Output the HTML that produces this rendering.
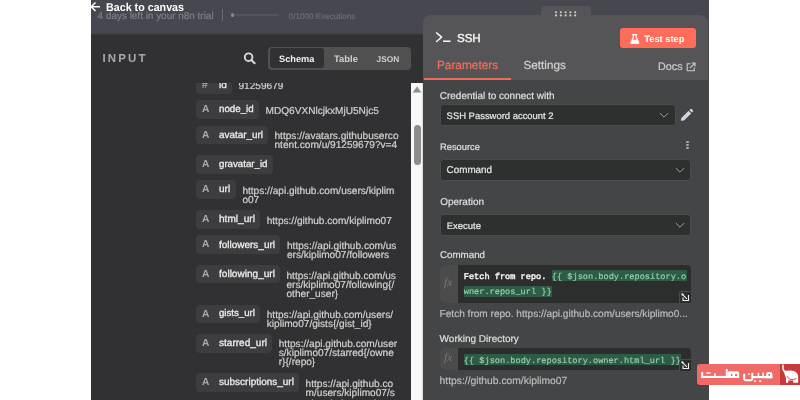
<!DOCTYPE html>
<html><head><meta charset="utf-8"><style>
html,body{margin:0;padding:0;width:800px;height:400px;overflow:hidden;background:#fff;position:relative}
.t{position:absolute;white-space:pre;text-rendering:geometricPrecision}
#w{position:absolute;left:0;top:0;width:800px;height:400px;will-change:transform}
</style></head><body><div id="w">
<div style="position:absolute;left:91px;top:0px;width:618px;height:400px;background:#474750;border-radius:0;"></div>
<div style="position:absolute;left:91px;top:34px;width:320px;height:366px;background:#313133;border-radius:0;"></div>
<div style="position:absolute;left:411px;top:34px;width:12px;height:49px;background:#313133;border-radius:0;"></div>
<div style="position:absolute;left:91px;top:33px;width:332px;height:1px;background:#424249;border-radius:0;"></div>
<div style="position:absolute;left:91px;top:34px;width:332px;height:1px;background:#38383c;border-radius:0;"></div>
<div style="position:absolute;left:411px;top:82.5px;width:12px;height:317.5px;background:#f7f7f7;border-radius:0;box-shadow: inset -1px 0 0 #dcdcdc;"></div>
<svg style="position:absolute;left:411px;top:82px" width="12" height="14"><path d="M1.6 10.4 L6 4.4 L10.4 10.4 Z" fill="#8e8e8e"/></svg>
<div style="position:absolute;left:413.75px;top:125px;width:7.5px;height:40px;background:#8c8c8c;border-radius:3.75px;"></div>
<div style="position:absolute;left:423px;top:15px;width:285px;height:385px;background:#444547;border-radius:8px 8px 0 0;"></div>
<div style="position:absolute;left:423px;top:15px;width:285px;height:65px;background:#555557;border-radius:8px 8px 0 0;"></div>
<div style="position:absolute;left:540.5px;top:6px;width:50px;height:14px;background:#555557;border-radius:4px 4px 0 0;"></div>
<svg style="position:absolute;left:540px;top:6px" width="50" height="14"><circle cx="16" cy="6.300000000000001" r="1.05" fill="#cfcfcf"/><circle cx="16" cy="9.4" r="1.05" fill="#cfcfcf"/><circle cx="20.799999999999955" cy="6.300000000000001" r="1.05" fill="#cfcfcf"/><circle cx="20.799999999999955" cy="9.4" r="1.05" fill="#cfcfcf"/><circle cx="25.600000000000023" cy="6.300000000000001" r="1.05" fill="#cfcfcf"/><circle cx="25.600000000000023" cy="9.4" r="1.05" fill="#cfcfcf"/><circle cx="30.399999999999977" cy="6.300000000000001" r="1.05" fill="#cfcfcf"/><circle cx="30.399999999999977" cy="9.4" r="1.05" fill="#cfcfcf"/><circle cx="35.200000000000045" cy="6.300000000000001" r="1.05" fill="#cfcfcf"/><circle cx="35.200000000000045" cy="9.4" r="1.05" fill="#cfcfcf"/></svg>
<svg style="position:absolute;left:89px;top:0px" width="14" height="14"><path d="M2.5 6.8 H11 M6.5 2.5 L2.2 6.8 L6.5 11" stroke="#fff" stroke-width="1.5" fill="none"/></svg>
<div style="position:absolute;left:222px;top:9px;width:1px;height:12px;background:#6b6b70;border-radius:0;"></div>
<div style="position:absolute;left:232px;top:14.3px;width:47px;height:1.6px;background:#54545c;border-radius:1px;"></div>
<div style="position:absolute;left:230.5px;top:13.4px;width:3.5px;height:3.5px;background:#8a8a90;border-radius:50%;"></div>
<svg style="position:absolute;left:240px;top:48px" width="20" height="20"><circle cx="8.6" cy="9.2" r="3.8" stroke="#d6d9de" stroke-width="1.9" fill="none"/><path d="M11.4 12 L14.6 15.2" stroke="#d6d9de" stroke-width="2.1" stroke-linecap="round"/></svg>
<div style="position:absolute;left:268px;top:46.5px;width:143px;height:23.5px;background:#505051;border-radius:4px;"></div>
<div style="position:absolute;left:270px;top:48.4px;width:54px;height:19.6px;background:#313133;border-radius:3px;"></div>
<div style="position:absolute;left:196.25px;top:75.2px;width:35.349999999999994px;height:18.75px;background:#3d3d3f;border-radius:4px;"></div>
<div style="position:absolute;left:196.25px;top:100px;width:62.5px;height:18.75px;background:#3d3d3f;border-radius:4px;"></div>
<div style="position:absolute;left:196.25px;top:125.5px;width:71.75px;height:18.75px;background:#3d3d3f;border-radius:4px;"></div>
<div style="position:absolute;left:196.25px;top:155px;width:76.25px;height:18.75px;background:#3d3d3f;border-radius:4px;"></div>
<div style="position:absolute;left:196.25px;top:180px;width:40.0px;height:18.75px;background:#3d3d3f;border-radius:4px;"></div>
<div style="position:absolute;left:196.25px;top:210px;width:63.75px;height:18.75px;background:#3d3d3f;border-radius:4px;"></div>
<div style="position:absolute;left:196.25px;top:235px;width:83.75px;height:18.75px;background:#3d3d3f;border-radius:4px;"></div>
<div style="position:absolute;left:196.25px;top:264.5px;width:83.75px;height:18.75px;background:#3d3d3f;border-radius:4px;"></div>
<div style="position:absolute;left:196.25px;top:304.5px;width:63.75px;height:18.75px;background:#3d3d3f;border-radius:4px;"></div>
<div style="position:absolute;left:196.25px;top:333.75px;width:75.75px;height:18.75px;background:#3d3d3f;border-radius:4px;"></div>
<div style="position:absolute;left:196.25px;top:373px;width:102.75px;height:18.75px;background:#3d3d3f;border-radius:4px;"></div>
<svg style="position:absolute;left:434px;top:30px" width="20" height="14"><path d="M2.6 2.9 L7.6 7.2 L2.6 11.5" stroke="#f0f0f0" stroke-width="1.6" fill="none" stroke-linecap="round" stroke-linejoin="round"/><path d="M9 11.2 H16.6" stroke="#f0f0f0" stroke-width="1.6"/></svg>
<div style="position:absolute;left:620px;top:28px;width:75.5px;height:20px;background:#ff6d5a;border-radius:3px;"></div>
<svg style="position:absolute;left:629px;top:33px" width="12" height="12"><path d="M3.2 1.6 H8.2 M4.3 1.6 V4.6 L1.9 9.2 Q1.5 10.2 2.5 10.2 H9 Q10 10.2 9.6 9.2 L7.2 4.6 V1.6" stroke="#fff" stroke-width="1.15" fill="none"/><path d="M3 6.8 H8.5 L9.7 9.8 Q9.7 10.4 9 10.4 H2.5 Q1.8 10.4 1.8 9.8 Z" fill="#fff"/></svg>
<div style="position:absolute;left:424px;top:78px;width:87px;height:2px;background:#ee6b5b;border-radius:0;"></div>
<svg style="position:absolute;left:686px;top:62px" width="10" height="10"><path d="M4.5 1.8 H1.2 V8.8 H8.2 V5.5" stroke="#c6cad4" stroke-width="1.1" fill="none"/><path d="M3.8 6.2 L8.6 1.4 M5.6 1 H9 V4.4" stroke="#c6cad4" stroke-width="1.2" fill="none"/></svg>
<div style="position:absolute;left:440px;top:103.75px;width:235.75px;height:22px;background:#2e2f2f;border-radius:4px;box-shadow: inset 0 0 0 1px #4a4b4d;"></div>
<svg style="position:absolute;left:658.2px;top:111.3px" width="12" height="8"><path d="M1.9 2.1 L6 6.2 L10.1 2.1" stroke="#9c9c9c" stroke-width="1" fill="none"/></svg>
<svg style="position:absolute;left:679px;top:108px" width="15" height="15"><path d="M1.8 12.8 L2.4 10 L9.6 2.8 L12.2 5.4 L5 12.6 Z" fill="#d2d6de"/><path d="M10.4 2 L11.4 1 Q12 0.5 12.6 1 L14 2.4 Q14.5 3 14 3.6 L13 4.6 Z" fill="#d2d6de"/></svg>
<div style="position:absolute;left:686.4px;top:140.5px;width:2.2px;height:2.2px;background:#a8a8a8;border-radius:50%;"></div>
<div style="position:absolute;left:686.4px;top:143.70000000000002px;width:2.2px;height:2.2px;background:#a8a8a8;border-radius:50%;"></div>
<div style="position:absolute;left:686.4px;top:146.9px;width:2.2px;height:2.2px;background:#a8a8a8;border-radius:50%;"></div>
<div style="position:absolute;left:440px;top:158.75px;width:251.25px;height:22px;background:#2e2f2f;border-radius:4px;box-shadow: inset 0 0 0 1px #4a4b4d;"></div>
<svg style="position:absolute;left:674px;top:166px" width="12" height="8"><path d="M1.9 2.1 L6 6.2 L10.1 2.1" stroke="#9c9c9c" stroke-width="1" fill="none"/></svg>
<div style="position:absolute;left:440px;top:213.75px;width:251.25px;height:22px;background:#2e2f2f;border-radius:4px;box-shadow: inset 0 0 0 1px #4a4b4d;"></div>
<svg style="position:absolute;left:674px;top:221.3px" width="12" height="8"><path d="M1.9 2.1 L6 6.2 L10.1 2.1" stroke="#9c9c9c" stroke-width="1" fill="none"/></svg>
<div style="position:absolute;left:439.5px;top:264.5px;width:251.5px;height:38.75px;background:#2c2d2d;border-radius:4px;"></div>
<div style="position:absolute;left:439.5px;top:264.5px;width:18.4px;height:38.75px;background:#4b4b4c;border-radius:4px 0 0 4px;"></div>
<div style="position:absolute;left:551.5px;top:270px;width:135.3px;height:11.25px;background:#2f5a45;border-radius:0;"></div>
<div style="position:absolute;left:463.5px;top:286px;width:88.5px;height:11px;background:#2f5a45;border-radius:0;"></div>
<div style="position:absolute;left:679.2px;top:291.2px;width:12px;height:12px;background:#2c2d2d;box-shadow:inset 1px 1px 0 #4a4a4a;border-radius:2px 0 0 0"></div>
<svg style="position:absolute;left:679.2px;top:291.2px" width="12" height="12"><path d="M4 6.5 V9.5 H9.5 V4" stroke="#f0f0f0" stroke-width="1.1" fill="none"/><path d="M3.2 3.2 L7.8 7.8" stroke="#f0f0f0" stroke-width="1.1"/><circle cx="3.4" cy="3.4" r="1.1" fill="#f0f0f0"/></svg>
<div style="position:absolute;left:439.5px;top:348.2px;width:251.5px;height:22.3px;background:#2c2d2d;border-radius:4px;"></div>
<div style="position:absolute;left:439.5px;top:348.2px;width:18.4px;height:22.3px;background:#4b4b4c;border-radius:4px 0 0 4px;"></div>
<div style="position:absolute;left:463.8px;top:353.9px;width:217px;height:11px;background:#2f5a45;border-radius:0;"></div>
<div style="position:absolute;left:679.2px;top:358.6px;width:12px;height:12px;background:#2c2d2d;box-shadow:inset 1px 1px 0 #4a4a4a;border-radius:2px 0 0 0"></div>
<svg style="position:absolute;left:679.2px;top:358.6px" width="12" height="12"><path d="M4 6.5 V9.5 H9.5 V4" stroke="#f0f0f0" stroke-width="1.1" fill="none"/><path d="M3.2 3.2 L7.8 7.8" stroke="#f0f0f0" stroke-width="1.1"/><circle cx="3.4" cy="3.4" r="1.1" fill="#f0f0f0"/></svg>
<div style="position:absolute;left:697px;top:363.5px;width:103px;height:21.5px;background:#f06b68;border-radius:3px 0 0 3px"></div>
<div style="position:absolute;left:780px;top:363.5px;width:20px;height:21.5px;background:#c9393b"></div>
<div class="t" style="left:97.60px;top:9.95px;font-size:9.955px;line-height:13px;font-weight:400;color:#7e7e88;font-family:'Liberation Sans';font-style:normal;-webkit-text-stroke:0.22px #7e7e88;">4 days left in your n8n trial</div>
<div class="t" style="left:105.60px;top:0.65px;font-size:11.400px;line-height:15px;font-weight:700;color:#ffffff;font-family:'Liberation Sans';font-style:normal;transform-origin:0 0;transform:scaleX(0.9408);">Back to canvas</div>
<div class="t" style="left:288.80px;top:10.79px;font-size:8.106px;line-height:11px;font-weight:400;color:#6c6c76;font-family:'Liberation Sans';font-style:normal;-webkit-text-stroke:0.22px #6c6c76;">0/1000 Executions</div>
<div class="t" style="left:102.50px;top:52.02px;font-size:11.500px;line-height:15px;font-weight:700;color:#a8a8a8;font-family:'Liberation Sans';font-style:normal;letter-spacing:2.1px;">INPUT</div>
<div class="t" style="left:279.00px;top:52.90px;font-size:9.230px;line-height:12px;font-weight:700;color:#eeeeee;font-family:'Liberation Sans';font-style:normal;">Schema</div>
<div class="t" style="left:334.00px;top:52.82px;font-size:9.458px;line-height:13px;font-weight:700;color:#d0d0d0;font-family:'Liberation Sans';font-style:normal;">Table</div>
<div class="t" style="left:376.60px;top:53.70px;font-size:8.373px;line-height:11px;font-weight:700;color:#d0d0d0;font-family:'Liberation Sans';font-style:normal;">JSON</div>
<div class="t" style="left:202.00px;top:79.14px;font-size:10.000px;line-height:13px;font-weight:400;color:#a6aab2;font-family:'Liberation Sans';font-style:normal;-webkit-text-stroke:0.22px #a6aab2;">#</div>
<div class="t" style="left:219.00px;top:78.64px;font-size:10.000px;line-height:13px;font-weight:400;color:#ececec;font-family:'Liberation Sans';font-style:normal;-webkit-text-stroke:0.3px #ececec;">id</div>
<div class="t" style="left:238.50px;top:79.80px;font-size:10.100px;line-height:14px;font-weight:400;color:#cfcfcf;font-family:'Liberation Sans';font-style:normal;-webkit-text-stroke:0.22px #cfcfcf;">91259679</div>
<div class="t" style="left:202.00px;top:103.37px;font-size:10.200px;line-height:14px;font-weight:700;color:#a6aab2;font-family:'Liberation Sans';font-style:normal;">A</div>
<div class="t" style="left:219.00px;top:103.02px;font-size:9.764px;line-height:13px;font-weight:400;color:#ececec;font-family:'Liberation Sans';font-style:normal;-webkit-text-stroke:0.3px #ececec;">node_id</div>
<div class="t" style="left:265.50px;top:104.90px;font-size:10.100px;line-height:14px;font-weight:400;color:#cfcfcf;font-family:'Liberation Sans';font-style:normal;-webkit-text-stroke:0.22px #cfcfcf;">MDQ6VXNlcjkxMjU5Njc5</div>
<div class="t" style="left:202.00px;top:128.87px;font-size:10.200px;line-height:14px;font-weight:700;color:#a6aab2;font-family:'Liberation Sans';font-style:normal;">A</div>
<div class="t" style="left:219.00px;top:128.97px;font-size:9.895px;line-height:13px;font-weight:400;color:#ececec;font-family:'Liberation Sans';font-style:normal;-webkit-text-stroke:0.3px #ececec;">avatar_url</div>
<div class="t" style="left:274.50px;top:129.60px;font-size:10.100px;line-height:14px;font-weight:400;color:#cfcfcf;font-family:'Liberation Sans';font-style:normal;-webkit-text-stroke:0.22px #cfcfcf;">https://avatars.githubuserco</div>
<div class="t" style="left:274.50px;top:138.90px;font-size:10.100px;line-height:14px;font-weight:400;color:#cfcfcf;font-family:'Liberation Sans';font-style:normal;-webkit-text-stroke:0.22px #cfcfcf;">ntent.com/u/91259679?v=4</div>
<div class="t" style="left:202.00px;top:158.37px;font-size:10.200px;line-height:14px;font-weight:700;color:#a6aab2;font-family:'Liberation Sans';font-style:normal;">A</div>
<div class="t" style="left:219.00px;top:158.04px;font-size:9.694px;line-height:13px;font-weight:400;color:#ececec;font-family:'Liberation Sans';font-style:normal;-webkit-text-stroke:0.3px #ececec;">gravatar_id</div>
<div class="t" style="left:202.00px;top:183.37px;font-size:10.200px;line-height:14px;font-weight:700;color:#a6aab2;font-family:'Liberation Sans';font-style:normal;">A</div>
<div class="t" style="left:219.00px;top:182.94px;font-size:10.000px;line-height:13px;font-weight:400;color:#ececec;font-family:'Liberation Sans';font-style:normal;-webkit-text-stroke:0.3px #ececec;">url</div>
<div class="t" style="left:242.40px;top:184.60px;font-size:10.100px;line-height:14px;font-weight:400;color:#cfcfcf;font-family:'Liberation Sans';font-style:normal;-webkit-text-stroke:0.22px #cfcfcf;">https://api.github.com/users/kiplim</div>
<div class="t" style="left:242.40px;top:193.80px;font-size:10.100px;line-height:14px;font-weight:400;color:#cfcfcf;font-family:'Liberation Sans';font-style:normal;-webkit-text-stroke:0.22px #cfcfcf;">o07</div>
<div class="t" style="left:202.00px;top:213.37px;font-size:10.200px;line-height:14px;font-weight:700;color:#a6aab2;font-family:'Liberation Sans';font-style:normal;">A</div>
<div class="t" style="left:219.00px;top:213.39px;font-size:10.122px;line-height:14px;font-weight:400;color:#ececec;font-family:'Liberation Sans';font-style:normal;-webkit-text-stroke:0.3px #ececec;">html_url</div>
<div class="t" style="left:266.70px;top:214.50px;font-size:10.100px;line-height:14px;font-weight:400;color:#cfcfcf;font-family:'Liberation Sans';font-style:normal;-webkit-text-stroke:0.22px #cfcfcf;">https://github.com/kiplimo07</div>
<div class="t" style="left:202.00px;top:238.37px;font-size:10.200px;line-height:14px;font-weight:700;color:#a6aab2;font-family:'Liberation Sans';font-style:normal;">A</div>
<div class="t" style="left:219.00px;top:238.94px;font-size:9.976px;line-height:13px;font-weight:400;color:#ececec;font-family:'Liberation Sans';font-style:normal;-webkit-text-stroke:0.3px #ececec;">followers_url</div>
<div class="t" style="left:287.00px;top:239.75px;font-size:10.100px;line-height:14px;font-weight:400;color:#cfcfcf;font-family:'Liberation Sans';font-style:normal;-webkit-text-stroke:0.22px #cfcfcf;">https://api.github.com/us</div>
<div class="t" style="left:287.00px;top:248.80px;font-size:10.100px;line-height:14px;font-weight:400;color:#cfcfcf;font-family:'Liberation Sans';font-style:normal;-webkit-text-stroke:0.22px #cfcfcf;">ers/kiplimo07/followers</div>
<div class="t" style="left:202.00px;top:267.87px;font-size:10.200px;line-height:14px;font-weight:700;color:#a6aab2;font-family:'Liberation Sans';font-style:normal;">A</div>
<div class="t" style="left:219.00px;top:267.91px;font-size:10.074px;line-height:14px;font-weight:400;color:#ececec;font-family:'Liberation Sans';font-style:normal;-webkit-text-stroke:0.3px #ececec;">following_url</div>
<div class="t" style="left:286.50px;top:269.60px;font-size:10.100px;line-height:14px;font-weight:400;color:#cfcfcf;font-family:'Liberation Sans';font-style:normal;-webkit-text-stroke:0.22px #cfcfcf;">https://api.github.com/us</div>
<div class="t" style="left:286.50px;top:278.60px;font-size:10.100px;line-height:14px;font-weight:400;color:#cfcfcf;font-family:'Liberation Sans';font-style:normal;-webkit-text-stroke:0.22px #cfcfcf;">ers/kiplimo07/following{/</div>
<div class="t" style="left:286.50px;top:287.60px;font-size:10.100px;line-height:14px;font-weight:400;color:#cfcfcf;font-family:'Liberation Sans';font-style:normal;-webkit-text-stroke:0.22px #cfcfcf;">other_user}</div>
<div class="t" style="left:202.00px;top:307.87px;font-size:10.200px;line-height:14px;font-weight:700;color:#a6aab2;font-family:'Liberation Sans';font-style:normal;">A</div>
<div class="t" style="left:219.00px;top:307.05px;font-size:9.668px;line-height:13px;font-weight:400;color:#ececec;font-family:'Liberation Sans';font-style:normal;-webkit-text-stroke:0.3px #ececec;">gists_url</div>
<div class="t" style="left:266.75px;top:308.50px;font-size:10.100px;line-height:14px;font-weight:400;color:#cfcfcf;font-family:'Liberation Sans';font-style:normal;-webkit-text-stroke:0.22px #cfcfcf;">https://api.github.com/users/</div>
<div class="t" style="left:266.75px;top:317.50px;font-size:10.100px;line-height:14px;font-weight:400;color:#cfcfcf;font-family:'Liberation Sans';font-style:normal;-webkit-text-stroke:0.22px #cfcfcf;">kiplimo07/gists{/gist_id}</div>
<div class="t" style="left:202.00px;top:337.12px;font-size:10.200px;line-height:14px;font-weight:700;color:#a6aab2;font-family:'Liberation Sans';font-style:normal;">A</div>
<div class="t" style="left:219.00px;top:336.67px;font-size:10.042px;line-height:14px;font-weight:400;color:#ececec;font-family:'Liberation Sans';font-style:normal;-webkit-text-stroke:0.3px #ececec;">starred_url</div>
<div class="t" style="left:278.75px;top:337.60px;font-size:10.100px;line-height:14px;font-weight:400;color:#cfcfcf;font-family:'Liberation Sans';font-style:normal;-webkit-text-stroke:0.22px #cfcfcf;">https://api.github.com/user</div>
<div class="t" style="left:278.75px;top:347.00px;font-size:10.100px;line-height:14px;font-weight:400;color:#cfcfcf;font-family:'Liberation Sans';font-style:normal;-webkit-text-stroke:0.22px #cfcfcf;">s/kiplimo07/starred{/owne</div>
<div class="t" style="left:278.75px;top:355.80px;font-size:10.100px;line-height:14px;font-weight:400;color:#cfcfcf;font-family:'Liberation Sans';font-style:normal;-webkit-text-stroke:0.22px #cfcfcf;">r}{/repo}</div>
<div class="t" style="left:202.00px;top:376.37px;font-size:10.200px;line-height:14px;font-weight:700;color:#a6aab2;font-family:'Liberation Sans';font-style:normal;">A</div>
<div class="t" style="left:219.00px;top:375.94px;font-size:9.995px;line-height:13px;font-weight:400;color:#ececec;font-family:'Liberation Sans';font-style:normal;-webkit-text-stroke:0.3px #ececec;">subscriptions_url</div>
<div class="t" style="left:305.60px;top:377.90px;font-size:10.100px;line-height:14px;font-weight:400;color:#cfcfcf;font-family:'Liberation Sans';font-style:normal;-webkit-text-stroke:0.22px #cfcfcf;">https://api.github.co</div>
<div class="t" style="left:305.60px;top:386.90px;font-size:10.100px;line-height:14px;font-weight:400;color:#cfcfcf;font-family:'Liberation Sans';font-style:normal;-webkit-text-stroke:0.22px #cfcfcf;">m/users/kiplimo07/s</div>
<div class="t" style="left:305.60px;top:398.40px;font-size:10.100px;line-height:14px;font-weight:400;color:#cfcfcf;font-family:'Liberation Sans';font-style:normal;-webkit-text-stroke:0.22px #cfcfcf;">ubscriptions_url</div>
<div class="t" style="left:457.00px;top:30.68px;font-size:11.600px;line-height:16px;font-weight:400;color:#f0f0f0;font-family:'Liberation Sans';font-style:normal;-webkit-text-stroke:0.45px #f0f0f0;letter-spacing:-0.1px;">SSH</div>
<div class="t" style="left:644.20px;top:32.86px;font-size:9.338px;line-height:13px;font-weight:700;color:#ffffff;font-family:'Liberation Sans';font-style:normal;">Test step</div>
<div class="t" style="left:436.90px;top:57.28px;font-size:11.880px;line-height:16px;font-weight:400;color:#f46e5d;font-family:'Liberation Sans';font-style:normal;-webkit-text-stroke:0.22px #f46e5d;">Parameters</div>
<div class="t" style="left:523.50px;top:58.34px;font-size:11.707px;line-height:16px;font-weight:400;color:#d2d2d2;font-family:'Liberation Sans';font-style:normal;-webkit-text-stroke:0.22px #d2d2d2;">Settings</div>
<div class="t" style="left:657.90px;top:59.64px;font-size:10.841px;line-height:15px;font-weight:400;color:#c6cad4;font-family:'Liberation Sans';font-style:normal;-webkit-text-stroke:0.22px #c6cad4;">Docs</div>
<div class="t" style="left:439.80px;top:89.64px;font-size:9.977px;line-height:13px;font-weight:400;color:#dedede;font-family:'Liberation Sans';font-style:normal;-webkit-text-stroke:0.22px #dedede;">Credential to connect with</div>
<div class="t" style="left:446.60px;top:110.22px;font-size:9.454px;line-height:13px;font-weight:400;color:#e4e4e4;font-family:'Liberation Sans';font-style:normal;-webkit-text-stroke:0.22px #e4e4e4;">SSH Password account 2</div>
<div class="t" style="left:440.00px;top:141.26px;font-size:9.346px;line-height:13px;font-weight:400;color:#dedede;font-family:'Liberation Sans';font-style:normal;-webkit-text-stroke:0.22px #dedede;">Resource</div>
<div class="t" style="left:446.60px;top:164.18px;font-size:9.864px;line-height:13px;font-weight:400;color:#e4e4e4;font-family:'Liberation Sans';font-style:normal;-webkit-text-stroke:0.22px #e4e4e4;">Command</div>
<div class="t" style="left:440.20px;top:196.04px;font-size:9.974px;line-height:13px;font-weight:400;color:#dedede;font-family:'Liberation Sans';font-style:normal;-webkit-text-stroke:0.22px #dedede;">Operation</div>
<div class="t" style="left:446.80px;top:219.52px;font-size:9.465px;line-height:13px;font-weight:400;color:#e4e4e4;font-family:'Liberation Sans';font-style:normal;-webkit-text-stroke:0.22px #e4e4e4;">Execute</div>
<div class="t" style="left:440.00px;top:248.52px;font-size:9.755px;line-height:13px;font-weight:400;color:#dedede;font-family:'Liberation Sans';font-style:normal;-webkit-text-stroke:0.22px #dedede;">Command</div>
<div class="t" style="left:444.00px;top:276.12px;font-size:11.500px;line-height:15px;font-weight:400;color:#78787c;font-family:'Liberation Serif';font-style:italic;">fx</div>
<div class="t" style="left:463.75px;top:270.61px;font-size:8.620px;line-height:12px;font-weight:400;color:#f2f2f2;font-family:'Liberation Mono';font-style:normal;-webkit-text-stroke:0.45px #f2f2f2;">Fetch from repo. </div>
<div class="t" style="left:551.81px;top:270.61px;font-size:8.620px;line-height:12px;font-weight:400;color:#92d8aa;font-family:'Liberation Mono';font-style:normal;-webkit-text-stroke:0.15px #92d8aa;">{{ $json.body.repository.o</div>
<div class="t" style="left:463.75px;top:285.61px;font-size:8.620px;line-height:12px;font-weight:400;color:#92d8aa;font-family:'Liberation Mono';font-style:normal;-webkit-text-stroke:0.15px #92d8aa;">wner.repos_url }}</div>
<div class="t" style="left:439.60px;top:307.90px;font-size:10.089px;line-height:14px;font-weight:400;color:#b9b9b9;font-family:'Liberation Sans';font-style:normal;-webkit-text-stroke:0.22px #b9b9b9;">Fetch from repo. https://api.github.com/users/kiplimo0...</div>
<div class="t" style="left:439.60px;top:332.63px;font-size:10.003px;line-height:14px;font-weight:400;color:#dedede;font-family:'Liberation Sans';font-style:normal;-webkit-text-stroke:0.22px #dedede;">Working Directory</div>
<div class="t" style="left:444.00px;top:351.12px;font-size:11.500px;line-height:15px;font-weight:400;color:#78787c;font-family:'Liberation Serif';font-style:italic;">fx</div>
<div class="t" style="left:463.80px;top:354.81px;font-size:8.620px;line-height:12px;font-weight:400;color:#92d8aa;font-family:'Liberation Mono';font-style:normal;-webkit-text-stroke:0.15px #92d8aa;">{{ $json.body.repository.owner.html_url }}</div>
<div class="t" style="left:439.60px;top:374.53px;font-size:10.311px;line-height:14px;font-weight:400;color:#b9b9b9;font-family:'Liberation Sans';font-style:normal;-webkit-text-stroke:0.22px #b9b9b9;">https://github.com/kiplimo07</div>
<div style="position:absolute;left:91px;top:71px;width:320px;height:12px;background:#313133"></div>
<svg style="position:absolute;left:697px;top:363px" width="103" height="23">
<g fill="#fff">
<rect x="4.2" y="9" width="2" height="6" rx="0.6"/>
<rect x="4.2" y="12.9" width="25" height="2.1"/>
<rect x="9.2" y="9.2" width="4.4" height="1.6" rx="0.5"/>
<rect x="17" y="10.4" width="1.8" height="4.6"/>
<rect x="28.8" y="6" width="2" height="9" rx="0.5"/>
<path d="M30.4 15 V10.4 Q30.4 8.2 32.6 8.2 H40 Q42.2 8.2 42.2 10.4 V15 Z M34 11 V13 H35.5 V11 Z M38 11 V13 H40 V11 Z" fill-rule="evenodd"/>
<path d="M47.2 10.7 V15.5 Q47.2 17.3 49 17.3 H53.5 Q55.3 17.3 55.3 15.5 V9.8" stroke="#fff" stroke-width="2" fill="none"/>
<rect x="50.9" y="10.2" width="1.8" height="1.8" rx="0.4"/>
<rect x="55" y="13" width="20.4" height="2.2"/>
<rect x="60.6" y="9.8" width="1.6" height="5.2"/>
<rect x="65.3" y="9.5" width="1.6" height="5.5"/>
<path d="M69.1 15.2 V10.9 Q69.1 8.9 71.1 8.9 H73.4 Q75.4 8.9 75.4 10.9 V15.2 Z M71.5 11 V13 H73 V11 Z" fill-rule="evenodd"/>
<rect x="57.2" y="17.3" width="1.8" height="1.6"/>
<rect x="62.2" y="17.3" width="2" height="1.6"/>
<path d="M87.5 7.7 L94 7.4 Q97 7.6 98.5 8.8 Q101.1 10.5 101.1 13 L101.1 19.8 L96.2 19.8 L96.2 17.6 L91.2 17.6 L91.2 19.8 L89 19.8 L89 14.8 Q88 13.5 87.5 11 Q87 9.2 87.5 7.7 Z"/>
</g>
<path d="M86 2.2 Q85.6 5.5 86.5 7.1 Q87.2 8.6 88.4 9.2" stroke="#fff" stroke-width="1.6" fill="none" stroke-linecap="round"/>
<path d="M89.6 12.9 Q92 16.5 94 16.5 Q97 16.3 99.5 15.7" stroke="#c9393b" stroke-width="0.9" fill="none"/>
</svg>
</div></body></html>
